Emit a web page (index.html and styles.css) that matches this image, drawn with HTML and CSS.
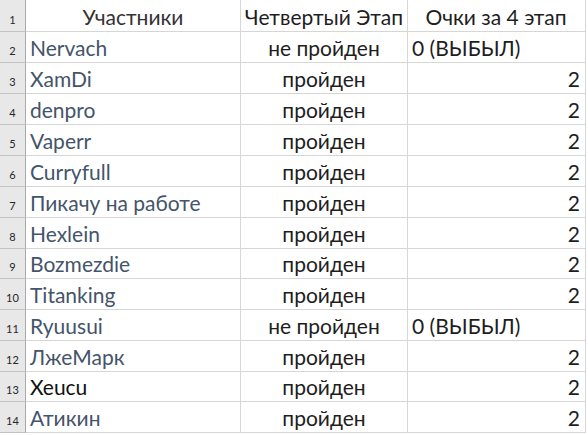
FILE: index.html
```html
<!DOCTYPE html>
<html lang="ru">
<head>
<meta charset="utf-8">
<title>Участники</title>
<link rel="stylesheet" href="styles.css">
</head>
<body>
<div class="sheet">
  <div class="row first">
    <div class="rh">1</div>
    <div class="c a hd">Участники</div>
    <div class="c b">Четвертый Этап</div>
    <div class="c cc hd-c">Очки за 4 этап</div>
  </div>
  <div class="row">
    <div class="rh">2</div>
    <div class="c a">Nervach</div>
    <div class="c b">не пройден</div>
    <div class="c cc left">0 (ВЫБЫЛ)</div>
  </div>
  <div class="row">
    <div class="rh">3</div>
    <div class="c a">XamDi</div>
    <div class="c b">пройден</div>
    <div class="c cc">2</div>
  </div>
  <div class="row">
    <div class="rh">4</div>
    <div class="c a">denpro</div>
    <div class="c b">пройден</div>
    <div class="c cc">2</div>
  </div>
  <div class="row">
    <div class="rh">5</div>
    <div class="c a">Vaperr</div>
    <div class="c b">пройден</div>
    <div class="c cc">2</div>
  </div>
  <div class="row">
    <div class="rh">6</div>
    <div class="c a">Curryfull</div>
    <div class="c b">пройден</div>
    <div class="c cc">2</div>
  </div>
  <div class="row">
    <div class="rh">7</div>
    <div class="c a">Пикачу на работе</div>
    <div class="c b">пройден</div>
    <div class="c cc">2</div>
  </div>
  <div class="row">
    <div class="rh">8</div>
    <div class="c a">Hexlein</div>
    <div class="c b">пройден</div>
    <div class="c cc">2</div>
  </div>
  <div class="row short">
    <div class="rh">9</div>
    <div class="c a">Bozmezdie</div>
    <div class="c b">пройден</div>
    <div class="c cc">2</div>
  </div>
  <div class="row">
    <div class="rh">10</div>
    <div class="c a">Titanking</div>
    <div class="c b">пройден</div>
    <div class="c cc">2</div>
  </div>
  <div class="row">
    <div class="rh">11</div>
    <div class="c a">Ryuusui</div>
    <div class="c b">не пройден</div>
    <div class="c cc left">0 (ВЫБЫЛ)</div>
  </div>
  <div class="row">
    <div class="rh">12</div>
    <div class="c a">ЛжеМарк</div>
    <div class="c b">пройден</div>
    <div class="c cc">2</div>
  </div>
  <div class="row short">
    <div class="rh">13</div>
    <div class="c a black">Xeucu</div>
    <div class="c b">пройден</div>
    <div class="c cc">2</div>
  </div>
  <div class="row">
    <div class="rh">14</div>
    <div class="c a">Атикин</div>
    <div class="c b">пройден</div>
    <div class="c cc">2</div>
  </div>
</div>
</body>
</html>
```

FILE: styles.css
```css
html, body {
  margin: 0;
  padding: 0;
  background: #ffffff;
}

body {
  font-family: Lato, "Noto Sans", sans-serif;
  font-size: 21px;
  color: #1e1e1e;
}

.sheet {
  display: flex;
  flex-direction: column;
  width: 586px;
}

.row {
  display: grid;
  grid-template-columns: 26px 215px 167px 178px;
  height: 31px;
  box-sizing: border-box;
  border-bottom: 1px solid #d6d6d6;
}

.row.first {
  height: 32px;
}

.row.short {
  height: 30px;
}

.rh {
  background: #e8e8e8;
  border-right: 1px solid #a9a9a9;
  border-bottom: 1px solid #c2c2c2;
  margin-bottom: -1px;
  box-sizing: border-box;
  font-size: 11px;
  color: #262626;
  display: flex;
  align-items: flex-end;
  justify-content: center;
  padding-bottom: 6px;
  line-height: 1;
}

.c {
  box-sizing: border-box;
  border-right: 1px solid #d6d6d6;
  display: flex;
  align-items: flex-end;
  line-height: 1;
  padding: 0 4px 4px 4px;
  white-space: nowrap;
  overflow: hidden;
}

.a {
  color: #44546a;
  padding-left: 4px;
}

.a.hd {
  color: #333333;
  justify-content: center;
}

.a.black {
  color: #111111;
}

.b {
  justify-content: center;
}

.cc {
  justify-content: flex-end;
  padding-right: 5px;
}

.cc.left {
  justify-content: flex-start;
}

.cc.hd-c {
  justify-content: center;
}
```
